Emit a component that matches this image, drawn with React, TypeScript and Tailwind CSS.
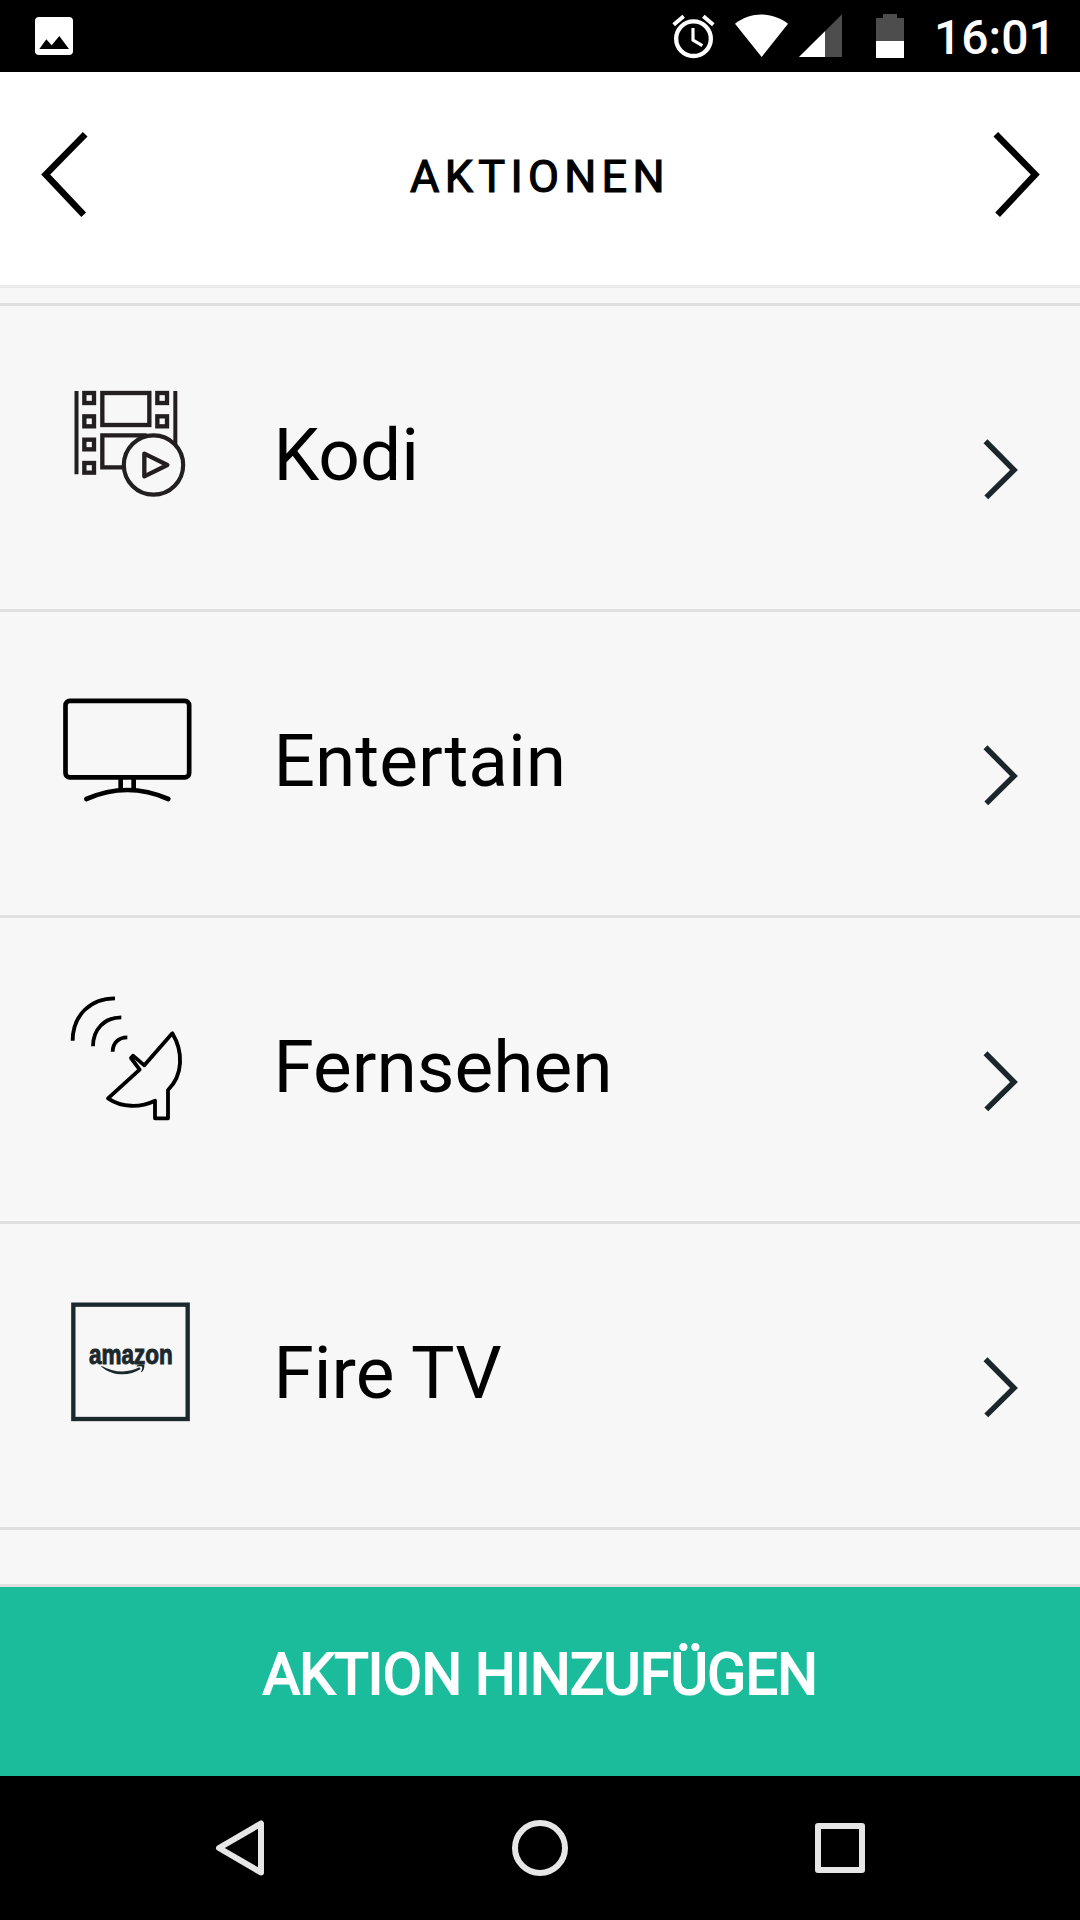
import React from "react";

function KodiIcon() {
  return (
    <svg
      viewBox="0 0 540 480"
      className="mt-[54px] h-[160px] w-[180px] shrink-0"
      fill="none"
      stroke="#231f20"
      strokeWidth="13"
    >
      <path d="M109.5 93V343M406 93V255" strokeWidth="12" />
      {/* perforation */}
      <rect x="133" y="99" width="29" height="30" />
      <rect x="133" y="169" width="29" height="30" />
      <rect x="133" y="239" width="29" height="29" />
      <rect x="133" y="309" width="29" height="29" />
      <rect x="352" y="99" width="29" height="30" />
      <rect x="352" y="169" width="29" height="30" />
      {/* frames */}
      <rect x="187" y="99" width="141" height="96" />
      <path d="M255 322H187V226H320" />
      {/* play */}
      <circle cx="340.5" cy="315" r="89" strokeWidth="12.5" fill="#f7f7f7" />
      <path d="M313 281L382 315L313 349Z" strokeLinejoin="round" />
    </svg>
  );
}

function TvIcon() {
  return (
    <svg
      viewBox="0 0 540 480"
      className="mt-[58px] h-[160px] w-[180px] shrink-0"
      fill="none"
      stroke="#000"
      strokeWidth="14"
    >
      <rect x="76.5" y="92.5" width="371" height="229.5" rx="13" />
      <path d="M242 322V362M281 322V362" />
      <path d="M139 387Q262 333 385 387" strokeLinecap="round" />
    </svg>
  );
}

function DishIcon() {
  return (
    <svg
      viewBox="0 0 540 510"
      className="mt-[52px] h-[170px] w-[180px] shrink-0"
      fill="none"
      stroke="#000"
      strokeWidth="11.5"
    >
      <path d="M98 212C98 136 151 85 225 85" />
      <path d="M159 229C159 178 193 142 244 142" />
      <path d="M218 245C218 220 235 202 262 202" />
      <path
        d="M397 190L313 286L279 257L273 264L299 299L204 385C245 413 300 414 345 392V445H384V360C430 315 430 245 397 190Z"
        strokeLinejoin="round"
      />
    </svg>
  );
}

function AmazonIcon() {
  return (
    <svg viewBox="0 0 540 510" className="mt-[56px] h-[170px] w-[180px] shrink-0" fill="#1b282c">
      <rect x="100" y="74" width="343" height="343" fill="none" stroke="#1b282c" strokeWidth="13" />
      <text
        x="147"
        y="252"
        fontSize="84"
        fontWeight="bold"
        stroke="#1b282c"
        strokeWidth="3"
        textLength="251"
        lengthAdjust="spacingAndGlyphs"
        className="font-['Liberation_Sans',sans-serif]"
      >
        amazon
      </text>
      <path d="M184 257C222 279 266 279 298 262L302 267C268 290 218 289 184 260Z" />
      <path d="M290 257C298 252 308 252 313 255C314 263 311 271 305 277L303 275C306 269 308 263 306 260C302 258 296 259 290 260Z" />
    </svg>
  );
}

const actions = [
  { label: "Kodi", icon: <KodiIcon /> },
  { label: "Entertain", icon: <TvIcon /> },
  { label: "Fernsehen", icon: <DishIcon /> },
  { label: "Fire TV", icon: <AmazonIcon /> },
];

function StatusBar() {
  return (
    <div className="flex h-[72px] items-start bg-black pl-[35px] text-white">
      <svg viewBox="105 51 114 114" className="mt-[17px] h-[38px] w-[38px]" fill="#fff">
        <rect x="105" y="51" width="114" height="114" rx="12" />
        <path d="M118 147L139 118L155 136L178 108L207 147Z" fill="#000" />
      </svg>

      <div className="ml-[599px] flex">
        {/* alarm */}
        <svg
          viewBox="66 42 129 135"
          className="mt-[14px] h-[45px] w-[43px]"
          fill="none"
          stroke="#fff"
        >
          <circle cx="130.5" cy="116" r="52" strokeWidth="13" />
          <path d="M129 84V120L157 137" strokeWidth="9.5" />
          <path d="M71 74L101 49M160 49L190 74" strokeWidth="12" />
        </svg>

        {/* wifi */}
        <svg viewBox="255 42 159 135" className="mt-[14px] ml-[20px] h-[45px] w-[53px]" fill="#fff">
          <path d="M255 71C303 34 366 34 414 71L335 171Z" />
        </svg>

        {/* signal */}
        <svg viewBox="447 42 129 135" className="mt-[14px] ml-[11px] h-[45px] w-[43px]">
          <path d="M447 171L576 43V171Z" fill="#4d4d4d" />
          <path d="M447 171L525 94V171Z" fill="#fff" />
        </svg>

        {/* battery */}
        <svg viewBox="678 42 84 135" className="mt-[14px] ml-[34px] h-[45px] w-[28px]">
          <path d="M699 42H741V54H762V124H678V54H699Z" fill="#4d4d4d" />
          <path d="M678 123H762V174H678Z" fill="#fff" />
        </svg>

        <span className="ml-[30px] pt-[1px] text-[48px] leading-[74px] font-medium">16:01</span>
      </div>
    </div>
  );
}

function Header() {
  return (
    <header className="flex h-[216px] items-center justify-between border-b-[3px] border-[#ebebeb] bg-white px-[36px] pb-2">
      <svg viewBox="0 0 60 101" className="h-[101px] w-[60px]" fill="none" stroke="#000" strokeWidth="6.5">
        <path d="M49.2 10.3L9.7 50.5L47.7 90.7" />
      </svg>
      <h1 className="mt-1 text-[45px] leading-none font-normal tracking-[5.3px] text-black [-webkit-text-stroke:1.2px_#000]">
        AKTIONEN
      </h1>
      <svg viewBox="0 0 60 101" className="h-[101px] w-[60px]" fill="none" stroke="#000" strokeWidth="6.5">
        <path d="M11.8 10.3L51.3 50.5L13.6 90.7" />
      </svg>
    </header>
  );
}

function NavBar() {
  return (
    <nav className="flex h-[144px] items-center justify-center gap-[240px] bg-black">
      <svg viewBox="0 0 60 60" className="size-[60px]" fill="none" stroke="#e6e6e6" strokeWidth="6">
        <path d="M51 5.5V54.5L9 30Z" strokeLinejoin="round" />
      </svg>
      <svg viewBox="0 0 60 60" className="size-[60px]" fill="none" stroke="#e6e6e6" strokeWidth="6">
        <circle cx="30" cy="30" r="25" />
      </svg>
      <svg viewBox="0 0 60 60" className="size-[60px]" fill="none" stroke="#e6e6e6" strokeWidth="6">
        <rect x="8" y="8" width="44" height="44" strokeLinejoin="round" />
      </svg>
    </nav>
  );
}

export default function App() {
  return (
    <div className="flex h-[1920px] w-[1080px] flex-col overflow-hidden bg-[#f7f7f7] font-[Roboto,sans-serif]">
      <StatusBar />
      <Header />

      <main className="flex-1 pt-[15px]">
        <ul className="border-t-[3px] border-[#e0e0e0]">
          {actions.map((action) => (
            <li key={action.label} className="flex h-[306px] items-start border-b-[3px] border-[#e0e0e0] pl-[40px]">
              {action.icon}
              <span className="ml-[53.5px] flex-1 text-[73px] leading-[298px] text-black">{action.label}</span>
              <svg
                viewBox="0 0 40 67"
                className="mt-[130px] mr-[60px] h-[67px] w-[40px]"
                fill="none"
                stroke="#1b262a"
                strokeWidth="5.5"
              >
                <path d="M5.5 5.3L34 34L6.3 61.4" />
              </svg>
            </li>
          ))}
        </ul>
      </main>

      <button className="h-[192px] border-t-[3px] border-[#e0e0e0] bg-[#1abc9c] pb-[14px] text-[57px] leading-none font-normal tracking-[-0.6px] text-white [-webkit-text-stroke:2px_#fff]">
        AKTION HINZUFÜGEN
      </button>

      <NavBar />
    </div>
  );
}
